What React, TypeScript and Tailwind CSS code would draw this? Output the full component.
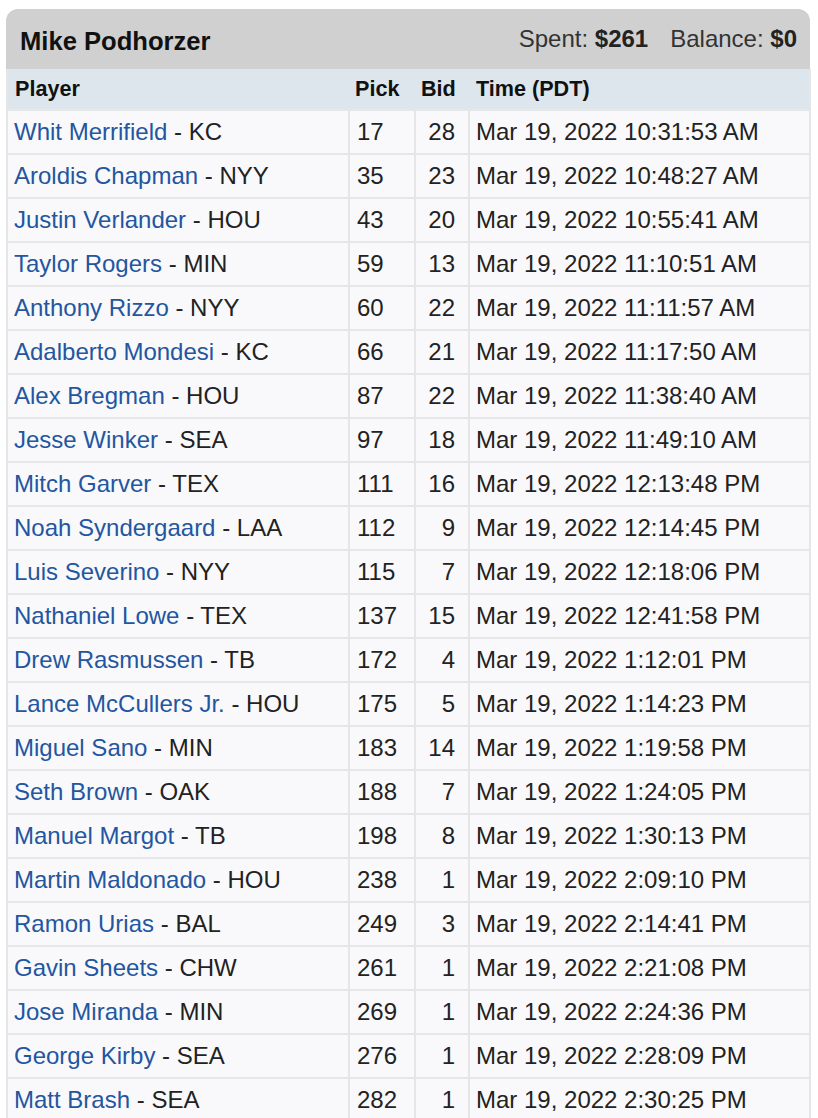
import React from "react";

type Pick = {
  name: string;
  team: string;
  pick: number;
  bid: number;
  time: string;
};

const PICKS: Pick[] = [
  { name: "Whit Merrifield", team: "KC", pick: 17, bid: 28, time: "Mar 19, 2022 10:31:53 AM" },
  { name: "Aroldis Chapman", team: "NYY", pick: 35, bid: 23, time: "Mar 19, 2022 10:48:27 AM" },
  { name: "Justin Verlander", team: "HOU", pick: 43, bid: 20, time: "Mar 19, 2022 10:55:41 AM" },
  { name: "Taylor Rogers", team: "MIN", pick: 59, bid: 13, time: "Mar 19, 2022 11:10:51 AM" },
  { name: "Anthony Rizzo", team: "NYY", pick: 60, bid: 22, time: "Mar 19, 2022 11:11:57 AM" },
  { name: "Adalberto Mondesi", team: "KC", pick: 66, bid: 21, time: "Mar 19, 2022 11:17:50 AM" },
  { name: "Alex Bregman", team: "HOU", pick: 87, bid: 22, time: "Mar 19, 2022 11:38:40 AM" },
  { name: "Jesse Winker", team: "SEA", pick: 97, bid: 18, time: "Mar 19, 2022 11:49:10 AM" },
  { name: "Mitch Garver", team: "TEX", pick: 111, bid: 16, time: "Mar 19, 2022 12:13:48 PM" },
  { name: "Noah Syndergaard", team: "LAA", pick: 112, bid: 9, time: "Mar 19, 2022 12:14:45 PM" },
  { name: "Luis Severino", team: "NYY", pick: 115, bid: 7, time: "Mar 19, 2022 12:18:06 PM" },
  { name: "Nathaniel Lowe", team: "TEX", pick: 137, bid: 15, time: "Mar 19, 2022 12:41:58 PM" },
  { name: "Drew Rasmussen", team: "TB", pick: 172, bid: 4, time: "Mar 19, 2022 1:12:01 PM" },
  { name: "Lance McCullers Jr.", team: "HOU", pick: 175, bid: 5, time: "Mar 19, 2022 1:14:23 PM" },
  { name: "Miguel Sano", team: "MIN", pick: 183, bid: 14, time: "Mar 19, 2022 1:19:58 PM" },
  { name: "Seth Brown", team: "OAK", pick: 188, bid: 7, time: "Mar 19, 2022 1:24:05 PM" },
  { name: "Manuel Margot", team: "TB", pick: 198, bid: 8, time: "Mar 19, 2022 1:30:13 PM" },
  { name: "Martin Maldonado", team: "HOU", pick: 238, bid: 1, time: "Mar 19, 2022 2:09:10 PM" },
  { name: "Ramon Urias", team: "BAL", pick: 249, bid: 3, time: "Mar 19, 2022 2:14:41 PM" },
  { name: "Gavin Sheets", team: "CHW", pick: 261, bid: 1, time: "Mar 19, 2022 2:21:08 PM" },
  { name: "Jose Miranda", team: "MIN", pick: 269, bid: 1, time: "Mar 19, 2022 2:24:36 PM" },
  { name: "George Kirby", team: "SEA", pick: 276, bid: 1, time: "Mar 19, 2022 2:28:09 PM" },
  { name: "Matt Brash", team: "SEA", pick: 282, bid: 1, time: "Mar 19, 2022 2:30:25 PM" },
];

export default function App() {
  return (
    <div
      className="min-h-screen bg-white px-[6px] pt-[9px] text-[#222]"
      style={{ fontFamily: '"Liberation Sans", Arial, sans-serif' }}
    >
      <div className="w-[804px]">
        <div className="flex h-[60px] items-center justify-between rounded-t-[12px] bg-[#d0d0d0] pl-[14px] pr-[13px] pt-[4px]">
          <h2 className="text-[25.6px] font-bold text-[#111]">Mike Podhorzer</h2>
          <div className="flex gap-[22px] pb-[4px] text-[24px] text-[#333]">
            <span>
              Spent: <b className="text-[#222]">$261</b>
            </span>
            <span>
              Balance: <b className="text-[#222]">$0</b>
            </span>
          </div>
        </div>

        <table className="w-[803px] table-fixed border-collapse">
          <colgroup>
            <col className="w-[342px]" />
            <col className="w-[66px]" />
            <col className="w-[54px]" />
            <col className="w-[341px]" />
          </colgroup>
          <thead>
            <tr className="h-[41px] bg-[#dce6ec] text-[21.6px] text-[#111]">
              <th className="border-2 border-[#e6e6e6] border-t-0 border-r-0 pl-[7px] text-left font-bold">
                Player
              </th>
              <th className="border-b-2 border-[#e6e6e6] pl-[6px] text-left font-bold">
                Pick
              </th>
              <th className="border-b-2 border-[#e6e6e6] pl-[6px] text-left font-bold">
                Bid
              </th>
              <th className="border-2 border-[#e6e6e6] border-t-0 border-l-0 pl-[7px] text-left font-bold">
                Time (PDT)
              </th>
            </tr>
          </thead>
          <tbody>
            {PICKS.map((p) => (
              <tr key={p.pick} className="h-[44px] bg-[#f9f9fb] text-[24px]">
                <td className="border-2 border-[#e6e6e6] pl-[6px] whitespace-nowrap">
                  <a href="#" className="text-[#2356a0]">
                    {p.name}
                  </a>{" "}
                  - {p.team}
                </td>
                <td className="border-2 border-[#e6e6e6] pl-[7px]">{p.pick}</td>
                <td className="border-2 border-[#e6e6e6] pr-[13px] text-right">{p.bid}</td>
                <td className="border-2 border-[#e6e6e6] pl-[6px] whitespace-nowrap">
                  {p.time}
                </td>
              </tr>
            ))}
          </tbody>
        </table>
      </div>
    </div>
  );
}
